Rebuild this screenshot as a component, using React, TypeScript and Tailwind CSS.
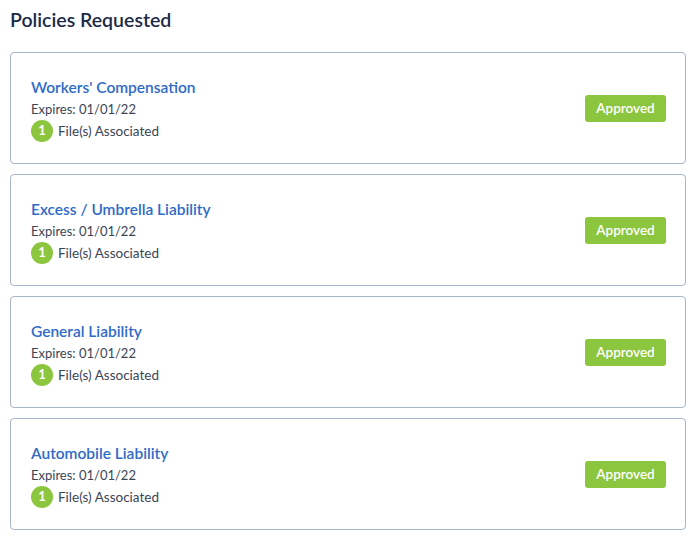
const policies = [
  { name: "Workers' Compensation", expires: '01/01/22', files: 1 },
  { name: 'Excess / Umbrella Liability', expires: '01/01/22', files: 1 },
  { name: 'General Liability', expires: '01/01/22', files: 1 },
  { name: 'Automobile Liability', expires: '01/01/22', files: 1 },
];

function PolicyCard({ name, expires, files }: { name: string; expires: string; files: number }) {
  return (
    <div className="flex h-[112px] items-center justify-between rounded-[4px] border border-[#a8b6cc] bg-white pl-[20px] pr-[19px]">
      <div className="flex flex-col pt-[2px]">
        <a href="#" className="text-[15.5px] font-semibold leading-[22px] text-[#2f6bc7]">
          {name}
        </a>
        <span className="text-[13px] leading-[22px] text-[#3a4556]">Expires: {expires}</span>
        <div className="flex h-[22px] items-center gap-[5px]">
          <span className="flex h-[22px] w-[22px] items-center justify-center rounded-full bg-[#8cc63f] text-[13px] font-bold text-white">
            {files}
          </span>
          <span className="text-[13.5px] text-[#3a4556]">File(s) Associated</span>
        </div>
      </div>
      <span className="flex h-[27px] w-[81px] items-center justify-center rounded-[3px] bg-[#8cc63f] text-[13.5px] font-semibold text-white">
        Approved
      </span>
    </div>
  );
}

export default function App() {
  return (
    <div className="min-h-screen bg-white px-[10px] pt-[7px] font-['Lato','Noto_Sans',sans-serif]">
      <h2 className="mb-[19px] h-[26px] text-[19.5px] font-semibold leading-[26px] text-[#1b2a47]">Policies Requested</h2>
      <div className="flex w-[676px] flex-col gap-[10px]">
        {policies.map((p) => (
          <PolicyCard key={p.name} {...p} />
        ))}
      </div>
    </div>
  );
}
